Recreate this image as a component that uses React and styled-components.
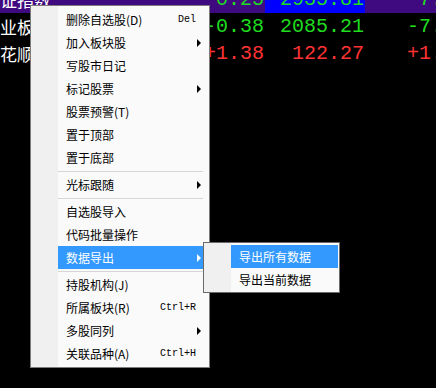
import React from "react";
import styled, { createGlobalStyle } from "styled-components";

const GlobalStyle = createGlobalStyle`
  html, body {
    margin: 0;
    padding: 0;
    background: #000;
    overflow: hidden;
  }
`;

const ROWS = [
  { name: "上证指数", change: "-0.25", price: "2935.81", tail: "-7.13", up: false, selected: true },
  { name: "创业板指", change: "-0.38", price: "2085.21", tail: "-7.92", up: false },
  { name: "同花顺", change: "+1.38", price: "122.27", tail: "+1.14", up: true },
];

const MENU = [
  { label: "删除自选股(D)", key: "Del" },
  { label: "加入板块股", sub: true },
  { label: "写股市日记" },
  { label: "标记股票", sub: true },
  { label: "股票预警(T)" },
  { label: "置于顶部" },
  { label: "置于底部" },
  { sep: true },
  { label: "光标跟随", sub: true },
  { sep: true },
  { label: "自选股导入" },
  { label: "代码批量操作" },
  { label: "数据导出", sub: true, active: true },
  { sep: true },
  { label: "持股机构(J)" },
  { label: "所属板块(R)", key: "Ctrl+R" },
  { label: "多股同列", sub: true },
  { label: "关联品种(A)", key: "Ctrl+H" },
];

const EXPORT_MENU = [
  { label: "导出所有数据", active: true },
  { label: "导出当前数据" },
];

export default function App() {
  return (
    <>
      <GlobalStyle />
      <Screen>
        <Quotes>
          {ROWS.map((r) => (
            <QuoteRow key={r.name} $selected={r.selected}>
              <Name>{r.name}</Name>
              <Num $up={r.up}>{r.change}</Num>
              <Num $up={r.up} $hl={r.selected}>{r.price}</Num>
              <Num $up={r.up}>{r.tail}</Num>
            </QuoteRow>
          ))}
        </Quotes>

        <Menu>
          {MENU.map((m, i) =>
            m.sep ? (
              <Sep key={i} />
            ) : (
              <Item key={i} $active={m.active} $sub={m.sub}>
                <span>{m.label}</span>
                {m.key && <Shortcut>{m.key}</Shortcut>}
                {m.sub && <Arrow $active={m.active} />}
                {m.active && (
                  <SubMenu>
                    {EXPORT_MENU.map((s) => (
                      <SubItem key={s.label} $active={s.active}>
                        {s.label}
                      </SubItem>
                    ))}
                  </SubMenu>
                )}
              </Item>
            )
          )}
        </Menu>
      </Screen>
    </>
  );
}

const Screen = styled.div`
  position: relative;
  width: 436px;
  height: 388px;
  overflow: hidden;
  background: #000;
`;

const Quotes = styled.div`
  margin-top: -14px;
  margin-left: -17px;
  display: flex;
  flex-direction: column;
`;

const QuoteRow = styled.div`
  display: grid;
  grid-template-columns: 161px 121px 100px 103px;
  height: 27px;
  align-items: center;
  background: ${(p) => (p.$selected ? "#3f0a80" : "transparent")};
`;

const Name = styled.div`
  font-family: "Noto Sans CJK SC", sans-serif;
  font-size: 17px;
  line-height: 27px;
  color: #fff;
  white-space: nowrap;
`;

const Num = styled.div`
  font-family: "Liberation Mono", monospace;
  font-size: 20px;
  line-height: 27px;
  text-align: right;
  padding-right: 1px;
  color: ${(p) => (p.$up ? "#ff3333" : "#1fdc1f")};
  background: ${(p) => (p.$hl ? "#0000ff" : "transparent")};
`;

const Menu = styled.div`
  position: absolute;
  left: 30px;
  top: 5px;
  width: 178px;
  padding: 2px 0;
  border: 1px solid #7c7c7c;
  background: linear-gradient(to right, #f0f0f0 27px, #fafafa 27px);
  display: flex;
  flex-direction: column;
  font-family: "Noto Sans CJK SC", sans-serif;
  font-size: 12px;
`;

const Item = styled.div`
  position: relative;
  display: flex;
  align-items: center;
  height: 23px;
  margin: 0 1px 0 27px;
  padding: 0 ${(p) => (p.$sub ? "7px" : "12px")} 0 8px;
  color: ${(p) => (p.$active ? "#fff" : "#000")};
  background: ${(p) => (p.$active ? "#3399ff" : "transparent")};
  white-space: nowrap;
`;

const Shortcut = styled.span`
  margin-left: auto;
  font-family: "Liberation Mono", monospace;
  font-size: 10px;
`;

const Arrow = styled.span`
  margin-left: auto;
  width: 0;
  height: 0;
  border-left: 4px solid ${(p) => (p.$active ? "#fff" : "#000")};
  border-top: 4px solid transparent;
  border-bottom: 4px solid transparent;
`;

const Sep = styled.div`
  height: 1px;
  margin: 2px 6px 1px 27px;
  background: #d6d6d6;
`;

const SubMenu = styled.div`
  position: absolute;
  left: 145px;
  top: -4px;
  width: 135px;
  padding: 2px 0 1px;
  border: 1px solid #6a6a6a;
  background: linear-gradient(to right, #f0f0f0 27px, #fafafa 27px);
  display: flex;
  flex-direction: column;
`;

const SubItem = styled.div`
  height: 23px;
  line-height: 23px;
  margin: 0 1px 0 27px;
  padding-left: 8px;
  color: ${(p) => (p.$active ? "#fff" : "#000")};
  background: ${(p) => (p.$active ? "#3399ff" : "transparent")};
`;
